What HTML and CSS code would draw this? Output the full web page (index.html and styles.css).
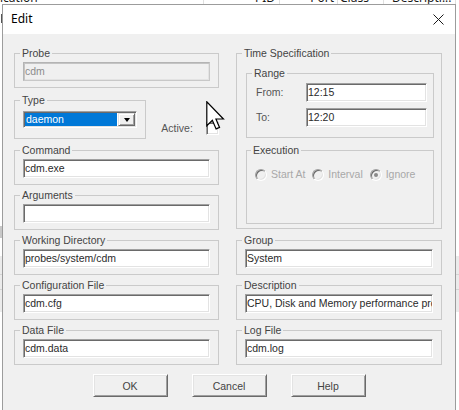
FILE: index.html
```html
<!DOCTYPE html>
<html>
<head>
<meta charset="utf-8">
<title>Edit</title>
<link rel="stylesheet" href="styles.css">
</head>
<body>
<div class="desk">
  <div class="lhead">
    <div class="lh-inner">
      <span class="col c1">ication</span><span class="col c2">PID</span><span class="col c3">Port</span><span class="col c4">Class</span><span class="col c5">Descripti...</span>
    </div>
  </div>
  <div class="lrows">
    <div class="lrow gap1"></div>
    <div class="lrow mark"></div>
    <div class="lrow gap2"></div>
    <div class="lrow graybit"></div>
    <div class="lrow gap3"></div>
    <div class="lrow band"></div>
  </div>
</div>

<div class="dlg">
  <div class="titlebar">
    <span class="title">Edit</span>
    <svg class="close" width="11" height="11" viewBox="0 0 11 11"><path d="M0.5 0.5 L10.5 10.5 M10.5 0.5 L0.5 10.5" stroke="#1a1a1a" stroke-width="1" fill="none"/></svg>
  </div>
  <div class="client">
    <div class="grid">
      <div class="leftstack">
        <fieldset class="grp"><legend>Probe</legend><div class="edit disabled">cdm</div></fieldset>
        <div class="typerow">
          <fieldset class="grp type"><legend>Type</legend>
            <div class="combo"><span class="combo-sel">daemon</span><span class="combo-btn"><i class="tri"></i></span></div>
          </fieldset>
          <span class="active-lbl">Active:</span><span class="check"></span>
        </div>
        <fieldset class="grp cmd"><legend>Command</legend><div class="edit">cdm.exe</div></fieldset>
        <fieldset class="grp args"><legend>Arguments</legend><div class="edit"></div></fieldset>
      </div>
      <fieldset class="grp time"><legend>Time Specification</legend>
        <fieldset class="grp range"><legend>Range</legend>
          <div class="rrow"><span class="lbl">From:</span><div class="edit">12:15</div></div>
          <div class="rrow"><span class="lbl">To:</span><div class="edit">12:20</div></div>
        </fieldset>
        <fieldset class="grp exec"><legend>Execution</legend>
          <div class="radios">
            <span class="radio"><i class="rb"></i>Start At</span>
            <span class="radio"><i class="rb"></i>Interval</span>
            <span class="radio"><i class="rb on"></i>Ignore</span>
          </div>
        </fieldset>
      </fieldset>
      <fieldset class="grp"><legend>Working Directory</legend><div class="edit">probes/system/cdm</div></fieldset>
      <fieldset class="grp"><legend>Group</legend><div class="edit">System</div></fieldset>
      <fieldset class="grp"><legend>Configuration File</legend><div class="edit">cdm.cfg</div></fieldset>
      <fieldset class="grp"><legend>Description</legend><div class="edit">CPU, Disk and Memory performance probe</div></fieldset>
      <fieldset class="grp"><legend>Data File</legend><div class="edit">cdm.data</div></fieldset>
      <fieldset class="grp"><legend>Log File</legend><div class="edit">cdm.log</div></fieldset>
    </div>
    <div class="buttons">
      <button class="btn">OK</button>
      <button class="btn">Cancel</button>
      <button class="btn">Help</button>
    </div>
  </div>
</div>

<svg class="cursor" width="19" height="30" viewBox="0 0 12.6 20">
  <path d="M0.5 0.5 L0.5 16.5 L4.2 12.9 L6.7 18.6 L9 17.6 L6.6 12 L11.6 12 Z" fill="#fff" stroke="#000" stroke-width="0.8" stroke-linejoin="miter"/>
</svg>
</body>
</html>
```

FILE: styles.css
```css
html, body {
  margin: 0;
  padding: 0;
}
body {
  width: 459px;
  height: 410px;
  overflow: hidden;
  background: #ffffff;
  position: relative;
  font-family: "Liberation Sans", Arial, sans-serif;
}

/* background list window */
.lhead {
  height: 4px;
  overflow: hidden;
}
.lh-inner {
  display: flex;
  margin-top: -10px;
  height: 16px;
  font: 12px/16px "Noto Sans", "Open Sans", sans-serif;
  color: #1a1a1a;
}
.col {
  display: block;
  box-sizing: border-box;
  border-right: 1px solid #e0e0e0;
  white-space: nowrap;
  overflow: hidden;
}
.c1 { width: 204px; }
.c2 { width: 76px; text-align: right; padding-right: 4px; }
.c3 { width: 58px; text-align: right; padding-right: 3px; }
.c4 { width: 46px; padding-left: 2px; }
.c5 { width: 72px; padding-left: 8px; }

.lrow { width: 100%; }
.gap1 { height: 10px; }
.mark { height: 9px; background: linear-gradient(to right, transparent 0 1px, #555 1px 2px, transparent 2px); }
.gap2 { height: 203px; }
.graybit { height: 12px; background: linear-gradient(to right, #c8c8c8 0 3px, transparent 3px); }
.gap3 { height: 18px; }
.band {
  height: 56px;
  background: linear-gradient(#ebebeb 0 18px, #d4d4d4 18px 19px, #ebebeb 19px 33px, #d4d4d4 33px 34px, #ebebeb 34px);
}

/* dialog window */
.dlg {
  position: absolute;
  left: 2px;
  top: 4px;
  width: 454px;
  height: 420px;
  box-sizing: border-box;
  border: 1px solid #9c9c9c;
  background: #f0f0f0;
  display: flex;
  flex-direction: column;
}
.titlebar {
  height: 29px;
  flex: none;
  background: #ffffff;
  display: flex;
  align-items: center;
  padding-left: 8px;
  padding-right: 11px;
}
.title {
  font: 12px/16px "Noto Sans", "Open Sans", sans-serif;
  color: #000;
  margin-top: -1px;
}
.close {
  margin-left: auto;
  display: block;
  margin-top: -1px;
}

.client {
  flex: 1;
  background: #f0f0f0;
}
.grid {
  display: grid;
  grid-template-columns: 205px 206px;
  column-gap: 17px;
  row-gap: 4px;
  padding: 13px 13px 0 11px;
  align-items: start;
}

fieldset.grp {
  margin: 0;
  min-width: 0;
  border: 1px solid #cacaca;
  padding: 2px 8px 6px 8px;
}
legend {
  padding: 0 2px;
  margin-left: -3px;
  font-size: 10.5px;
  line-height: 13px;
  color: #444;
}

.edit {
  box-sizing: border-box;
  height: 19px;
  border: 1px solid;
  border-color: #a0a0a0 #ffffff #ffffff #a0a0a0;
  box-shadow: inset 1px 1px 0 #6a6a6a, inset -1px -1px 0 #e3e3e3;
  background: #ffffff;
  font-size: 10.5px;
  line-height: 17px;
  color: #2a2a2a;
  white-space: nowrap;
  overflow: hidden;
  padding: 0 0 0 1px;
}
.edit.disabled {
  background: #f0f0f0;
  color: #8c8c8c;
  box-shadow: inset 1px 1px 0 #c4c4c4, inset -1px -1px 0 #e3e3e3;
  border-color: #b4b4b4 #c8c8c8 #c8c8c8 #b4b4b4;
}

.leftstack {
  display: flex;
  flex-direction: column;
}
.typerow {
  display: flex;
  align-items: flex-end;
  margin-top: 6px;
}
fieldset.type {
  width: 133px;
  box-sizing: border-box;
  padding: 4px 8px 10px 8px;
}
fieldset.cmd { margin-top: 5px; }
fieldset.args { margin-top: 4px; }
.combo {
  box-sizing: border-box;
  height: 17px;
  border: 1px solid;
  border-color: #a0a0a0 #ffffff #ffffff #a0a0a0;
  box-shadow: inset 1px 1px 0 #6a6a6a, inset -1px -1px 0 #e3e3e3;
  background: #fff;
  display: flex;
  padding: 1px;
}
.combo-sel {
  flex: 1;
  background: #0078d7;
  color: #fff;
  font-size: 10.5px;
  line-height: 13px;
  padding-left: 1px;
}
.combo-btn {
  width: 17px;
  box-sizing: border-box;
  margin-left: 1px;
  border: 1px solid;
  border-color: #e3e3e3 #6a6a6a #6a6a6a #e3e3e3;
  box-shadow: inset 1px 1px 0 #ffffff, inset -1px -1px 0 #a0a0a0;
  background: #f0f0f0;
  display: flex;
  align-items: center;
  justify-content: center;
}
.tri {
  width: 0;
  height: 0;
  border-left: 3.5px solid transparent;
  border-right: 3.5px solid transparent;
  border-top: 4px solid #000;
}
.active-lbl {
  width: 45px;
  margin-left: 15px;
  margin-bottom: 4px;
  font-size: 10.5px;
  line-height: 13px;
  color: #555;
}
.check {
  width: 13px;
  height: 13px;
  box-sizing: border-box;
  margin-bottom: 4px;
  border: 1px solid;
  border-color: #a0a0a0 #ffffff #ffffff #a0a0a0;
  box-shadow: inset 1px 1px 0 #6a6a6a, inset -1px -1px 0 #e3e3e3;
  background: #fff;
}

fieldset.time {
  padding: 7px 7px 4px 9px;
}
fieldset.time > legend,
fieldset.range > legend,
fieldset.exec > legend {
  margin-left: -4px;
}
fieldset.range {
  padding: 3px 6px 10px 9px;
  display: flex;
  flex-direction: column;
  gap: 6px;
}
.rrow {
  display: grid;
  grid-template-columns: 50px 121px;
  align-items: center;
}
.lbl {
  font-size: 10.5px;
  line-height: 13px;
  color: #555;
}
fieldset.exec {
  margin-top: 6px;
  padding: 11px 6px 42px 8px;
}
.radios {
  display: flex;
  height: 13px;
}
.radio {
  width: 63px;
  display: flex;
  align-items: center;
  font-size: 10.5px;
  line-height: 13px;
  color: #a8a8a8;
  white-space: nowrap;
}
.rb {
  width: 12px;
  height: 12px;
  box-sizing: border-box;
  border-radius: 50%;
  border: 1px solid;
  border-color: #a0a0a0 #ffffff #ffffff #a0a0a0;
  box-shadow: inset 1px 1px 0 #6a6a6a, inset -1px -1px 0 #e3e3e3;
  background: #f0f0f0;
  margin-right: 4px;
  display: flex;
  align-items: center;
  justify-content: center;
  flex: none;
}
.rb.on::after {
  content: "";
  width: 4px;
  height: 4px;
  border-radius: 50%;
  background: #8a8a8a;
}

.buttons {
  display: flex;
  justify-content: center;
  gap: 24px;
  margin-top: 9px;
}
.btn {
  width: 75px;
  height: 23px;
  box-sizing: border-box;
  margin: 0;
  padding: 0;
  border: 1px solid;
  border-color: #ffffff #6a6a6a #6a6a6a #ffffff;
  box-shadow: inset 1px 1px 0 #e3e3e3, inset -1px -1px 0 #a0a0a0;
  background: #f0f0f0;
  font-family: "Liberation Sans", Arial, sans-serif;
  font-size: 10.5px;
  color: #444;
}

.cursor {
  position: absolute;
  left: 206px;
  top: 101px;
}
```
